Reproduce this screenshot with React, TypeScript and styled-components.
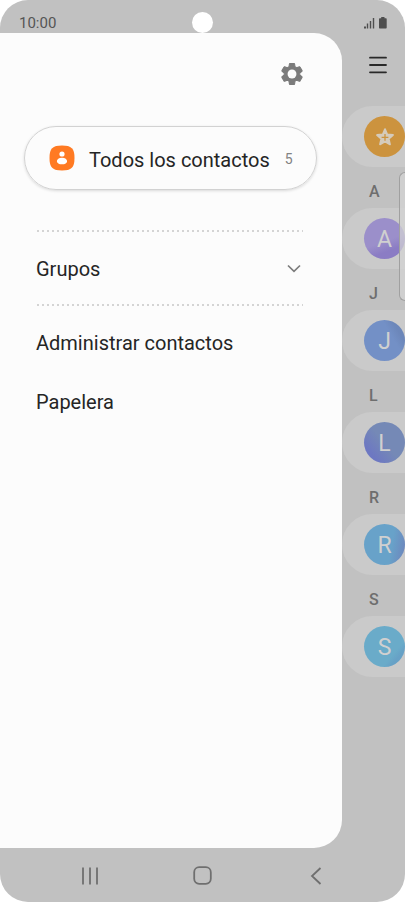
import React from "react";
import styled, { createGlobalStyle } from "styled-components";

const GlobalStyle = createGlobalStyle`
  *, *::before, *::after { box-sizing: border-box; }
  body {
    margin: 0;
    background: #ffffff;
    font-family: Roboto, "Liberation Sans", sans-serif;
    color: #252525;
  }
  button {
    margin: 0;
    padding: 0;
    border: 0;
    background: none;
    color: inherit;
    font: inherit;
    text-align: left;
    cursor: pointer;
  }
  svg { display: block; flex: none; }
`;

const Phone = styled.div`
  display: flex;
  flex-direction: column;
  min-height: 100vh;
  overflow: hidden;
  border-radius: 28px;
  background: #c1c1c1;
`;

const StatusBar = styled.header`
  position: relative;
  display: flex;
  align-items: center;
  justify-content: space-between;
  height: 33px;
  padding: 13px 18px 0 19px;
  font-size: 15px;
  line-height: 20px;
  color: #555555;
`;

const Camera = styled.span`
  position: absolute;
  top: 12px;
  left: 50%;
  width: 21px;
  height: 21px;
  margin-left: -11px;
  border-radius: 50%;
  background: #ffffff;
`;

const Body = styled.div`
  flex: 1;
  display: flex;
`;

const Drawer = styled.aside`
  flex: 1;
  min-width: 0;
  border-radius: 0 28px 28px 0;
  background: #fcfcfc;
`;

const DrawerHeader = styled.div`
  display: flex;
  justify-content: flex-end;
  padding: 28px 37px 39px 24px;
`;

const IconButton = styled.button`
  display: flex;
  align-items: center;
  justify-content: center;
`;

const AllContacts = styled.button`
  display: flex;
  align-items: center;
  width: calc(100% - 49px);
  height: 64px;
  margin: 0 25px 40px 24px;
  padding: 0 24px;
  border: 1px solid #d2d2d2;
  border-radius: 32px;
  box-shadow: 0 1px 3px rgba(0, 0, 0, 0.14);
  font-size: 20px;
  line-height: 28px;
  white-space: nowrap;
`;

const AllLabel = styled.span`
  margin: 3px 15px 0 14px;
`;

const Count = styled.span`
  padding-top: 2px;
  font-size: 14px;
  color: #828282;
`;

const Divider = styled.hr`
  height: 2px;
  margin: 0 39px 0 37px;
  border: 0;
  background: repeating-linear-gradient(90deg, #d4d4d4 0 2px, transparent 2px 5px);
`;

const MenuRow = styled.button<{ $tall?: boolean }>`
  display: flex;
  align-items: center;
  justify-content: space-between;
  width: 100%;
  height: ${(p) => (p.$tall ? 72 : 59)}px;
  padding: ${(p) => (p.$tall ? 1 : 0)}px 40px 0 36px;
  font-size: 20px;
  line-height: 28px;
`;

const Links = styled.nav`
  padding-top: 7px;
`;

const ContactStrip = styled.main`
  position: relative;
  flex: none;
  width: 63px;
`;

const MenuButton = styled(IconButton)`
  width: 100%;
  height: 64px;
  margin-bottom: 9px;
  padding-left: 8px;
`;

const Card = styled.button`
  display: flex;
  align-items: center;
  width: 100%;
  height: 61px;
  padding-left: 22px;
  border-radius: 31px 0 0 31px;
  background: #cacaca;
`;

const Avatar = styled.span<{ $fill: string }>`
  display: flex;
  align-items: center;
  justify-content: center;
  flex: none;
  width: 41px;
  height: 41px;
  border-radius: 50%;
  background: ${(p) => p.$fill};
  color: #d0d0d0;
  font-size: 23px;
  line-height: 28px;
`;

const Initial = styled.span`
  padding-top: 2px;
`;

const Section = styled.h2`
  height: 41px;
  margin: 0;
  padding-left: 27px;
  font-size: 16px;
  font-weight: 500;
  line-height: 50px;
  color: #6e6e6e;
`;

const ScrollHandle = styled.span`
  position: absolute;
  top: 139px;
  right: 0;
  width: 6px;
  height: 129px;
  border: 1px solid #a0a0a0;
  border-right: 0;
  border-radius: 6px 0 0 6px;
  background: rgba(212, 212, 212, 0.7);
`;

const NavBar = styled.footer`
  display: grid;
  grid-template-columns: repeat(3, 1fr);
  height: 54px;
  padding: 1px 32px 0 33px;
`;

const contacts = [
  { letter: "A", fill: "linear-gradient(160deg, #9b8fca 55%, #8b7cc4 75%)" },
  { letter: "J", fill: "linear-gradient(60deg, #7390c6 65%, #6c87ba 80%)" },
  { letter: "L", fill: "linear-gradient(50deg, #6d78c2 20%, #7589b6 50%)" },
  { letter: "R", fill: "linear-gradient(100deg, #68a2c9 65%, #6d87bd 95%)" },
  { letter: "S", fill: "linear-gradient(130deg, #6aabc9 70%, #67a1c6 80%)" },
];

export default function App() {
  return (
    <>
      <GlobalStyle />
      <Phone>
        <StatusBar>
          <time>10:00</time>
          <Camera />
          <svg width="23" height="13" viewBox="0 0 23 13" fill="#4e4e4e" aria-label="Señal y batería">
            <rect x="0" y="9.500" width="2" height="2" />
            <rect x="2.800" y="6.500" width="1.400" height="5" />
            <rect x="5.800" y="4" width="1.400" height="7.500" />
            <rect x="8.800" y="1" width="1.400" height="10.500" />
            <path d="M17.200 0h3.300v1.200h1.200c.6 0 1 .4 1 1v8.400c0 .6-.4 1-1 1h-5.700c-.6 0-1-.4-1-1V2.200c0-.6.4-1 1-1h1.200z" />
          </svg>
        </StatusBar>
        <Body>
          <Drawer>
            <DrawerHeader>
              <IconButton aria-label="Ajustes">
                <svg width="26" height="26" viewBox="0 0 24 24">
                  <path
                    d="M19.140 12.940c.04-.3.06-.61.06-.94 0-.32-.02-.64-.07-.94l2.030-1.580c.18-.14.23-.41.12-.61l-1.920-3.320c-.12-.22-.37-.29-.59-.22l-2.390.96c-.5-.38-1.030-.7-1.620-.94l-.36-2.540c-.04-.24-.24-.41-.48-.41h-3.840c-.24 0-.43.17-.47.41l-.36 2.540c-.59.24-1.130.57-1.620.94l-2.390-.96c-.22-.08-.47 0-.59.22L2.740 8.870c-.12.21-.08.47.12.61l2.030 1.580c-.05.3-.09.63-.09.94s.02.64.07.94l-2.030 1.580c-.18.14-.23.41-.12.61l1.920 3.320c.12.22.37.29.59.22l2.390-.96c.5.38 1.030.7 1.620.94l.36 2.540c.05.24.24.41.48.41h3.840c.24 0 .44-.17.47-.41l.36-2.540c.59-.24 1.130-.56 1.620-.94l2.390.96c.22.08.47 0 .59-.22l1.920-3.320c.12-.22.07-.47-.12-.61z"
                    fill="#7b7b7b"
                    stroke="#7b7b7b"
                    strokeWidth="1"
                    strokeLinejoin="round"
                  />
                  <circle cx="12" cy="12" r="4.100" fill="#fcfcfc" />
                </svg>
              </IconButton>
            </DrawerHeader>
            <AllContacts>
              <svg width="26" height="26" viewBox="0 0 26 26">
                <path d="M13 .5C22.500.5 25.500 3.500 25.500 13S22.500 25.500 13 25.500.5 22.500.5 13 3.500.5 13 .5z" fill="#ff7a22" />
                <circle cx="13" cy="9" r="2.600" fill="#fff" />
                <path d="M13 12.700c3.200 0 5.100 1.600 5.100 3.500 0 2-2.100 3.100-5.100 3.100s-5.100-1.100-5.100-3.100c0-1.900 1.900-3.500 5.100-3.500z" fill="#fff" />
              </svg>
              <AllLabel>Todos los contactos</AllLabel>
              <Count>5</Count>
            </AllContacts>
            <Divider />
            <MenuRow $tall aria-expanded="false">
              Grupos
              <svg width="16" height="10" viewBox="0 0 16 10" fill="none" stroke="#7c7c7c" strokeWidth="1.700">
                <path d="M2 1.500l6 5.800 6-5.800" />
              </svg>
            </MenuRow>
            <Divider />
            <Links>
              <MenuRow>Administrar contactos</MenuRow>
              <MenuRow>Papelera</MenuRow>
            </Links>
          </Drawer>
          <ContactStrip>
            <MenuButton aria-label="Menú">
              <svg width="18" height="18" viewBox="0 0 18 18" stroke="#292929" strokeWidth="1.800" strokeLinecap="round">
                <path d="M1 1.700h16M1 9h16M1 16.300h16" />
              </svg>
            </MenuButton>
            <Card aria-label="Favoritos">
              <Avatar $fill="#cc933e">
                <svg width="20" height="20" viewBox="0 0 20 20">
                  <path d="M10 2.200l2.300 5.300 5.700.5-4.300 3.800 1.300 5.600-5-2.900-5 2.900 1.300-5.600L2 8l5.700-.5z" fill="#d5cbbb" stroke="#d5cbbb" strokeWidth="1.800" strokeLinejoin="round" />
                  <path d="M10 7v6.800M6.600 10.400h6.800" stroke="#cc933e" strokeWidth="1.300" />
                </svg>
              </Avatar>
            </Card>
            {contacts.map((c) => (
              <React.Fragment key={c.letter}>
                <Section>{c.letter}</Section>
                <Card>
                  <Avatar $fill={c.fill}>
                    <Initial>{c.letter}</Initial>
                  </Avatar>
                </Card>
              </React.Fragment>
            ))}
            <ScrollHandle />
          </ContactStrip>
        </Body>
        <NavBar>
          <IconButton aria-label="Recientes">
            <svg width="18" height="18" viewBox="0 0 18 18" stroke="#6f6f6f" strokeWidth="1.800">
              <path d="M2 .5v17M9 .5v17M16 .5v17" />
            </svg>
          </IconButton>
          <IconButton aria-label="Inicio">
            <svg width="19" height="19" viewBox="0 0 19 19" fill="none" stroke="#6f6f6f" strokeWidth="1.800">
              <rect x="1.200" y="1.200" width="16.600" height="16.600" rx="5" />
            </svg>
          </IconButton>
          <IconButton aria-label="Atrás">
            <svg width="12" height="18" viewBox="0 0 12 18" fill="none" stroke="#6f6f6f" strokeWidth="1.800">
              <path d="M10.500 1L2 9l8.500 8" />
            </svg>
          </IconButton>
        </NavBar>
      </Phone>
    </>
  );
}
